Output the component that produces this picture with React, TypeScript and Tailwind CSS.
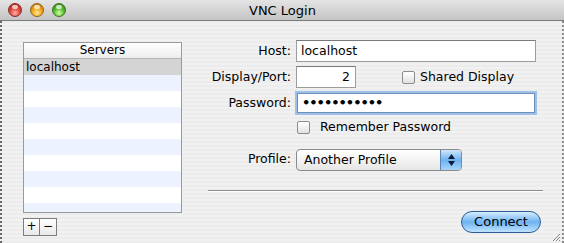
import React from "react";

const font = "font-['Lucida_Grande','DejaVu_Sans',sans-serif]";

const Light = ({ color }: { color: "red" | "yellow" | "green" }) => {
  const bg =
    color === "red"
      ? "bg-[radial-gradient(circle_at_50%_75%,#ffb3a8_0%,#e0463c_45%,#a8201a_100%)] border-[#8a2a24]"
      : color === "yellow"
      ? "bg-[radial-gradient(circle_at_50%_75%,#ffe7a0_0%,#f0a818_45%,#b06a08_100%)] border-[#94620e]"
      : "bg-[radial-gradient(circle_at_50%_75%,#d6ffa8_0%,#58bc30_45%,#2c7a14_100%)] border-[#3a7020]";
  return (
    <div className={`relative w-[14px] h-[14px] rounded-full border ${bg}`}>
      <div className="absolute left-[3px] top-[1px] w-[6px] h-[4px] rounded-full bg-white/70" />
    </div>
  );
};

const Checkbox = () => (
  <div className="w-[13px] h-[13px] rounded-[2px] border border-[#8c8c8c] bg-gradient-to-b from-[#ffffff] to-[#e2e2e2]" />
);

const rows = ["localhost", "", "", "", "", "", "", "", "", ""];

const App = () => {
  return (
    <div className={`w-[564px] h-[243px] overflow-hidden flex flex-col text-black ${font}`}>
      <div className="h-[21px] shrink-0 flex items-center bg-gradient-to-b from-[#e4e4e4] to-[#c4c4c4] border-b border-[#7a7a7a] relative">
        <div className="flex items-center gap-[8px] pl-[8px]">
          <Light color="red" />
          <Light color="yellow" />
          <Light color="green" />
        </div>
        <div className="absolute left-[249px] top-[2px] text-[13px] leading-[17px]">VNC Login</div>
      </div>
      <div className="flex-1 flex border-l-2 border-dotted border-l-[#6a6a6a] border-r-2 border-r-[#8a8a8a] bg-[repeating-linear-gradient(to_bottom,#ececec_0px,#ececec_2px,#f1f1f1_2px,#f1f1f1_4px)] relative">
        <div className="pl-[21px] pt-[21px] flex flex-col">
          <div className="w-[159px] h-[171px] border border-[#9a9a9a] bg-white flex flex-col overflow-hidden">
            <div className="h-[16px] shrink-0 text-center text-[12px] leading-[15px] bg-gradient-to-b from-[#ffffff] to-[#ececec] border-b border-[#b4b4b4]">
              Servers
            </div>
            {rows.map((r, i) => (
              <div
                key={i}
                className={`h-[16px] shrink-0 pl-[2px] text-[12px] leading-[16px] ${
                  i === 0 ? "bg-[#d4d4d4]" : i % 2 === 1 ? "bg-[#edf3fe]" : "bg-white"
                }`}
              >
                {r}
              </div>
            ))}
          </div>
          <div className="flex mt-[5px]">
            <div className="w-[17px] h-[18px] border border-[#7c7c7c] bg-gradient-to-b from-white to-[#e8e8e8] text-[12px] leading-[15px] text-center">+</div>
            <div className="w-[17px] h-[18px] border border-l-0 border-[#7c7c7c] bg-gradient-to-b from-white to-[#e8e8e8] text-[12px] leading-[15px] text-center">−</div>
          </div>
        </div>

        <div className="flex flex-col pt-[19px] text-[12.5px]">
          <div className="flex items-center h-[22px]">
            <div className="w-[110px] text-right pr-[1px]">Host:</div>
            <div className="ml-[4px] w-[240px] h-[22px] border border-[#9c9c9c] border-t-[#7a7a7a] bg-white pl-[4px] leading-[20px]">localhost</div>
          </div>
          <div className="flex items-center h-[22px] mt-[4px]">
            <div className="w-[110px] text-right pr-[1px]">Display/Port:</div>
            <div className="ml-[4px] w-[60px] h-[22px] border border-[#9c9c9c] border-t-[#7a7a7a] bg-white pr-[5px] text-right leading-[20px]">2</div>
            <div className="ml-[46px] flex items-center gap-[5px]">
              <Checkbox />
              <span>Shared Display</span>
            </div>
          </div>
          <div className="flex items-center h-[22px] mt-[4px]">
            <div className="w-[110px] text-right pr-[1px]">Password:</div>
            <div className="ml-[5px] w-[238px] h-[20px] border border-[#6f8fb8] bg-white pl-[4px] leading-[18px] ring-2 ring-[#9cc0ea] text-[13px] tracking-[-1px] font-bold">
              •••••••••••
            </div>
          </div>
          <div className="flex items-center h-[14px] mt-[6px] ml-[115px]">
            <Checkbox />
            <span className="ml-[10px]">Remember Password</span>
          </div>
          <div className="flex items-center h-[23px] mt-[14px]">
            <div className="w-[110px] text-right pr-[1px]">Profile:</div>
            <div className="ml-[4px] w-[166px] h-[22px] rounded-[4px] border border-[#8a8a8a] bg-gradient-to-b from-[#ffffff] to-[#e6e6e6] flex overflow-hidden">
              <div className="flex-1 pl-[7px] leading-[20px]">Another Profile</div>
              <div className="w-[21px] bg-gradient-to-b from-[#cfe6fb] via-[#6eb2ef] to-[#a8d4fa] border-l border-[#5a86b8] flex flex-col items-center justify-center gap-[2px]">
                <svg width="7" height="5" viewBox="0 0 7 5"><path d="M3.5 0 L7 5 L0 5 Z" fill="#0a1a3a" /></svg>
                <svg width="7" height="5" viewBox="0 0 7 5"><path d="M0 0 L7 0 L3.5 5 Z" fill="#0a1a3a" /></svg>
              </div>
            </div>
          </div>
          <div className="mt-[19px] ml-[26px] w-[335px] h-[1px] bg-[#8e8e8e] border-b border-b-white box-content" />
          <div className="flex justify-end mt-[19px] w-[359px]">
            <div className="w-[80px] h-[22px] rounded-full border border-[#2e5b93] bg-gradient-to-b from-[#d6ecfd] via-[#6cb3f2] to-[#bfe2ff] text-center leading-[20px] text-[13px]">
              Connect
            </div>
          </div>
        </div>

        <svg className="absolute right-[1px] bottom-[1px]" width="10" height="10" viewBox="0 0 10 10">
          <path d="M9 2 L2 9 M9 5 L5 9 M9 8 L8 9" stroke="#8a8a8a" strokeWidth="1" />
        </svg>
      </div>
    </div>
  );
};

export default App;
